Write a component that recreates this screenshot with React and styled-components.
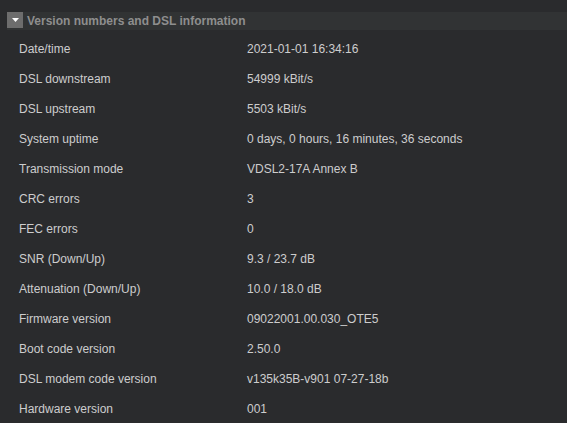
import React from "react";
import styled, { createGlobalStyle } from "styled-components";

const GlobalStyle = createGlobalStyle`
  html, body {
    margin: 0;
    padding: 0;
    background: #2a2b2d;
    font-family: "Liberation Sans", Arial, sans-serif;
  }
`;

const Page = styled.div`
  padding: 12px 0 0 7px;
  height: 423px;
  box-sizing: border-box;
  overflow: hidden;
`;

const SectionHeader = styled.div`
  display: flex;
  align-items: center;
  height: 18px;
  background: #313334;
  gap: 4px;
`;

const Toggle = styled.div`
  width: 16px;
  height: 16px;
  align-self: flex-start;
  background: #6d6d6d;
  display: flex;
  align-items: center;
  justify-content: center;
`;

const Title = styled.span`
  color: #8e8e8e;
  font-weight: bold;
  font-size: 12px;
`;

const Table = styled.div`
  margin-top: 4px;
  display: flex;
  flex-direction: column;
`;

const Row = styled.div`
  display: grid;
  grid-template-columns: 228px 1fr;
  height: 30px;
  align-items: center;
  padding-left: 12px;
  color: #cdcdcd;
  font-size: 12px;
`;

const rows = [
  ["Date/time", "2021-01-01 16:34:16"],
  ["DSL downstream", "54999 kBit/s"],
  ["DSL upstream", "5503 kBit/s"],
  ["System uptime", "0 days, 0 hours, 16 minutes, 36 seconds"],
  ["Transmission mode", "VDSL2-17A Annex B"],
  ["CRC errors", "3"],
  ["FEC errors", "0"],
  ["SNR (Down/Up)", "9.3 / 23.7 dB"],
  ["Attenuation (Down/Up)", "10.0 / 18.0 dB"],
  ["Firmware version", "09022001.00.030_OTE5"],
  ["Boot code version", "2.50.0"],
  ["DSL modem code version", "v135k35B-v901 07-27-18b"],
  ["Hardware version", "001"],
];

export default function App() {
  return (
    <>
      <GlobalStyle />
      <Page>
        <SectionHeader>
          <Toggle>
            <svg width="7" height="4" viewBox="0 0 7 4">
              <path d="M0 0 L7 0 L3.5 4 Z" fill="#ffffff" />
            </svg>
          </Toggle>
          <Title>Version numbers and DSL information</Title>
        </SectionHeader>
        <Table>
          {rows.map(([label, value]) => (
            <Row key={label}>
              <span>{label}</span>
              <span>{value}</span>
            </Row>
          ))}
        </Table>
      </Page>
    </>
  );
}
